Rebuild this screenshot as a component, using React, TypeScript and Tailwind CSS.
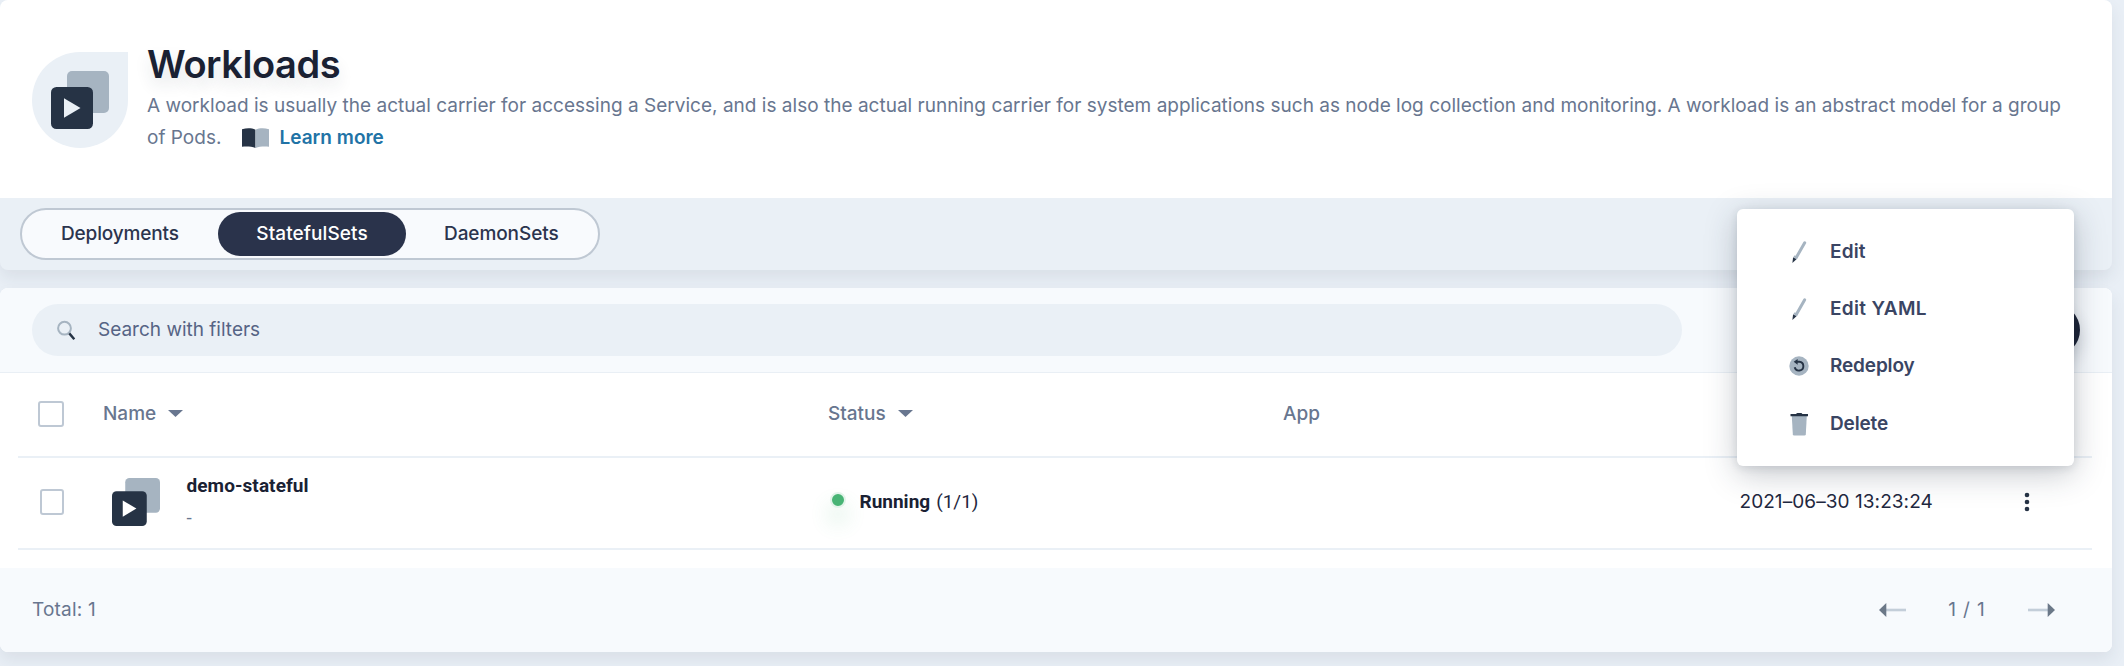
import type { ReactNode } from "react";

function WorkloadIcon({ size, hole, className }: { size: number; hole: string; className?: string }) {
  return (
    <svg width={size} height={size} viewBox="0 0 58 58" className={className}>
      <rect x="16" y="0" width="42" height="42" rx="5" fill="#a6b4c1" />
      <rect x="0" y="16" width="42" height="42" rx="5.5" fill="#263345" />
      <path d="M13 27.200 29.500 37 13 46.800Z" fill={hole} />
    </svg>
  );
}

function BookIcon() {
  return (
    <svg width="27" height="20" viewBox="0 0 27 20">
      <path d="M0 1.200C5 0 9.500 0 13.500 1.700V20C9.500 18.500 5 18.200 0 18.700Z" fill="#263345" />
      <path d="M27 1.200C22 0 17.500 0 13.500 1.700V20C17.500 18.500 22 18.200 27 18.700Z" fill="#a6b4c1" />
    </svg>
  );
}

function SearchIcon() {
  return (
    <svg width="20" height="21" viewBox="0 0 20 21">
      <circle cx="7.500" cy="8.200" r="6.400" fill="none" stroke="#a6b4c1" strokeWidth="2" />
      <path d="M12.300 13.400 17.300 19.300" stroke="#263345" strokeWidth="2.400" />
    </svg>
  );
}

function PenIcon() {
  return (
    <svg width="20" height="24" viewBox="0 0 20 24">
      <path d="M15.700 2.800 7 18" stroke="#a6b4c1" strokeWidth="3" strokeLinecap="round" />
      <path d="M4.100 17.300 7.400 19.300 3.400 22.900Z" fill="#263345" />
      <path d="M4.400 16.900 5.700 15.300 8.700 17.200 7.600 19Z" fill="#a6b4c1" />
    </svg>
  );
}

function RedeployIcon() {
  return (
    <svg width="20" height="20" viewBox="0 0 20 20">
      <circle cx="10" cy="10" r="9.700" fill="#a6b4c1" />
      <path d="M7 5.800H10.300A4.400 4.400 0 1 1 5.700 11.300" fill="none" stroke="#263345" strokeWidth="1.900" />
      <path d="M4.700 5.800 8.600 2.900V8.700Z" fill="#263345" />
    </svg>
  );
}

function TrashIcon() {
  return (
    <svg width="20" height="24" viewBox="0 0 20 24">
      <path d="M2.800 4H17.800L16.800 22.200Q16.700 23.500 15.400 23.500H5.200Q3.900 23.500 3.800 22.200Z" fill="#a6b4c1" />
      <path d="M1.500 2H7.200Q7.400 1 8.500 1H12Q13.100 1 13.300 2H19V4.200H1.500Z" fill="#263345" />
    </svg>
  );
}

function Caret() {
  return (
    <svg width="15" height="7" viewBox="0 0 15 7">
      <path d="M0 0H15L7.500 7Z" fill="#68768f" />
    </svg>
  );
}

function Arrow({ flip }: { flip?: boolean }) {
  return (
    <svg width="27" height="14" viewBox="0 0 27 14" className={flip ? "rotate-180" : ""}>
      <path d="M7 7H27" stroke="#c3ced9" strokeWidth="2.600" />
      <path d="M7.300 0V14L0 7Z" fill="#6b7888" />
    </svg>
  );
}

function Checkbox({ className }: { className: string }) {
  return <span className={`block h-[26px] rounded-[3px] border-2 border-[#bec8d4] bg-white ${className}`} />;
}

function Column({ className, label, sortable }: { className: string; label: string; sortable?: boolean }) {
  return (
    <div className={`flex items-center gap-3 font-medium text-[#68768f] ${className}`}>
      <span>{label}</span>
      {sortable && <Caret />}
    </div>
  );
}

function MenuItem({ icon, label, className }: { icon: ReactNode; label: string; className?: string }) {
  return (
    <li className="flex h-[57.3px] items-center font-semibold text-[#3a4563]">
      <span className="mr-[21px] flex w-5 justify-center">{icon}</span>
      <span className={className}>{label}</span>
    </li>
  );
}

export default function App() {
  return (
    <div className="relative h-[666px] w-[2124px] overflow-hidden bg-[#e9eff6] font-['Inter',sans-serif] text-[19px] leading-8">
      <section className="h-[270px] w-[2112px] rounded-lg bg-[#eaf0f6] shadow-[0_8px_16px_0_rgba(36,46,66,0.08)]">
        <header className="flex h-[198px] rounded-t-lg bg-white pl-8">
          <div className="mt-[52px] flex size-24 items-center justify-center rounded-full rounded-tr-none bg-[#eaf0f6]">
            <WorkloadIcon size={58} hole="#eaf0f6" />
          </div>
          <div className="ml-[19px] pt-10">
            <h1 className="text-[38px] font-semibold leading-[48px] tracking-[-0.45px] text-[#1a2133] [text-shadow:0_8px_16px_rgba(36,46,66,0.12)]">
              Workloads
            </h1>
            <p className="mt-[2px] w-[1925px] tracking-[0.015px] text-[#68768f]">
              A workload is usually the actual carrier for accessing a Service, and is also the actual running carrier for
              system applications such as node log collection and monitoring. A workload is an abstract model for a group of
              Pods.
              <a className="ml-[21px] inline-flex h-8 items-center gap-[10px] align-top font-semibold text-[#2173a6]">
                <BookIcon />
                <span>Learn more</span>
              </a>
            </p>
          </div>
        </header>
        <nav className="flex pl-5 pt-[10px]">
          <div className="flex h-[52px] w-[580px] items-center rounded-full border-2 border-[#bfc8d3] bg-[#f8fafd] font-medium text-[#2b344e]">
            <span className="w-[196px] pl-[39px] tracking-[-0.15px]">Deployments</span>
            <span className="flex h-11 w-[188px] items-center justify-center rounded-full bg-[#2a334b] tracking-[0.08px] text-white">
              StatefulSets
            </span>
            <span className="pl-[38px] tracking-[-0.08px]">DaemonSets</span>
          </div>
        </nav>
      </section>

      <section className="mt-[18px] h-[364px] w-[2112px] rounded-lg bg-white shadow-[0_8px_16px_0_rgba(36,46,66,0.08)]">
        <div className="flex h-[85px] items-center justify-between rounded-t-lg border-b border-[#e9eff5] bg-[#f7fafd] px-8">
          <div className="flex h-[52px] w-[1650px] items-center rounded-full bg-[#eaf0f6] pl-[25px] text-[#566485]">
            <SearchIcon />
            <span className="ml-[21px]">Search with filters</span>
          </div>
          <div className="h-[52px] w-[180px] rounded-full bg-[#1a2133] shadow-[0_8px_16px_0_rgba(36,46,66,0.2)]" />
        </div>

        <div className="mx-5 ml-[18px] flex h-[85px] items-center border-b-2 border-[#eaf0f6] pb-[2px]">
          <Checkbox className="ml-5 w-[26px]" />
          <Column className="ml-[39px] w-[725px]" label="Name" sortable />
          <Column className="w-[455px]" label="Status" sortable />
          <Column className="w-[400px]" label="App" />
        </div>

        <div className="mx-5 ml-[18px] flex h-[92px] items-center border-b-2 border-[#eaf0f6] pb-[2px]">
          <Checkbox className="ml-[22px] w-6" />
          <WorkloadIcon size={48} hole="#ffffff" className="ml-12" />
          <div className="ml-[26.5px] w-[643px]">
            <div className="font-['Roboto',sans-serif] font-bold tracking-[0.08px] text-[#1a2133]">demo-stateful</div>
            <div className="font-['Roboto',sans-serif] text-[#68768f]">-</div>
          </div>
          <div className="flex w-[910px] items-center text-[#1f2840]">
            <span className="mb-1 mr-[14px] size-4 rounded-full border-2 border-[#e3f4ea] bg-[#48b475] shadow-[0_14px_20px_2px_rgba(72,180,117,0.16)]" />
            <span className="font-['Roboto',sans-serif] font-bold text-[#1a2133]">Running</span>
            <span className="ml-[6px] font-['Roboto',sans-serif]">(1/1)</span>
          </div>
          <span className="w-[284px] tracking-[0.07px] text-[#1f2840]">2021–06–30 13:23:24</span>
          <svg width="6" height="20" viewBox="0 0 6 20" className="shrink-0">
            <g fill="#263345">
              <circle cx="3" cy="3" r="2.300" />
              <circle cx="3" cy="10" r="2.300" />
              <circle cx="3" cy="17" r="2.300" />
            </g>
          </svg>
        </div>

        <footer className="mt-[18px] flex h-[84px] items-center rounded-b-lg bg-[#f7fafd] pl-8 pr-[57px] text-[#68768f]">
          <span className="tracking-[0.2px]">Total: 1</span>
          <div className="ml-auto flex items-center">
            <Arrow />
            <span className="w-[122px] text-center tracking-[0.9px]">1 / 1</span>
            <Arrow flip />
          </div>
        </footer>
      </section>

      <ul className="absolute left-[1737px] top-[209px] h-[257px] w-[337px] rounded-md bg-white pl-[52px] pt-[14px] shadow-[0_8px_32px_0_rgba(36,46,66,0.26),0_2px_8px_0_rgba(36,46,66,0.12)]">
        <MenuItem icon={<PenIcon />} label="Edit" className="tracking-[0.15px]" />
        <MenuItem icon={<PenIcon />} label="Edit YAML" className="tracking-[0.32px]" />
        <MenuItem icon={<RedeployIcon />} label="Redeploy" className="tracking-[-0.15px]" />
        <MenuItem icon={<TrashIcon />} label="Delete" className="tracking-[-0.15px]" />
      </ul>
    </div>
  );
}
